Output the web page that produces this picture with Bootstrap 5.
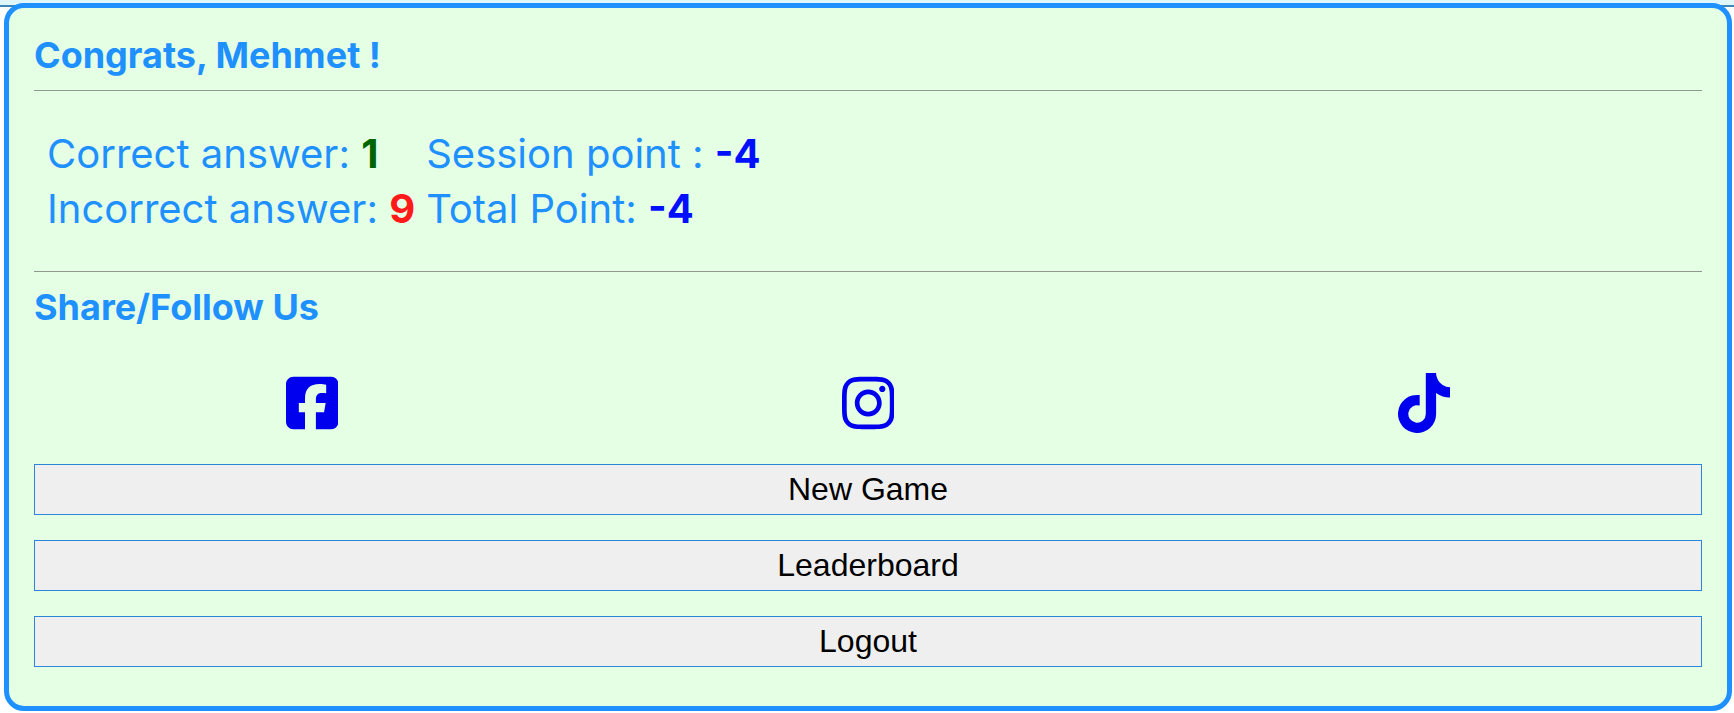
<!DOCTYPE html>
<html lang="en">
<head>
<meta charset="utf-8">
<meta name="viewport" content="width=device-width, initial-scale=1">
<title>Game result</title>
<link href="https://cdn.jsdelivr.net/npm/bootstrap@5.3.0/dist/css/bootstrap.min.css" rel="stylesheet">
<style>
body { font-family: Inter, sans-serif; background: #fff; }
.top-strip { height: 7px; background: #e0f7fa; border-bottom: 2px solid #3a87b8; }
.result-card { margin: -4px 2px 0 4px; padding: 25px; border: 5px solid #1e90ff; border-radius: 20px; background: #e4ffe4; color: #1e90ff; }
.result-title { font-size: 36px; line-height: 44px; font-weight: 700; }
.rule { height: 1px; border: 0; opacity: 1; background: #8f998f; margin: 0; }
.title-rule { margin-top: 13px; }
.share-title { margin-top: 13px; }
.stats { margin: 35px 12px; font-size: 40px; line-height: 55px; font-weight: 400; }
.stats td { padding: 0 10px 0 1px; }
.stats strong { font-weight: 700; }
.good { color: #006400; }
.bad { color: #ff1a1a; }
.points { color: #0010ff; }
.social { margin: 44px 0 31px; }
.social svg { height: 60px; display: block; fill: #0000ee; }
.game-btn { font-family: "Liberation Sans", Arial, sans-serif; font-size: 32px; line-height: 49px; padding: 0; color: #000; background: #efefef; border: 1px solid #2b86d9; border-radius: 0; }
.game-btn:hover { background: #e5e5e5; border-color: #1e90ff; color: #000; }
.actions { gap: 25px; padding-bottom: 14px; }
</style>
</head>
<body>
<div class="top-strip"></div>
<main class="result-card">
  <h1 class="result-title mb-0">Congrats, Mehmet !</h1>
  <hr class="rule title-rule">
  <table class="stats">
    <tbody>
      <tr><td>Correct answer: <strong class="good">1</strong></td><td>Session point : <strong class="points">-4</strong></td></tr>
      <tr><td>Incorrect answer: <strong class="bad">9</strong></td><td>Total Point: <strong class="points">-4</strong></td></tr>
    </tbody>
  </table>
  <hr class="rule">
  <h2 class="result-title share-title mb-0">Share/Follow Us</h2>
  <nav class="social row g-0" aria-label="Social links">
    <div class="col-4 d-flex justify-content-center"><a href="#" aria-label="Facebook"><svg viewBox="0 0 448 512"><path d="M64 32C28.700 32 0 60.700 0 96V416c0 35.300 28.700 64 64 64h98.200V334.200H109.400V256h52.800V222.300c0-87.100 39.400-127.500 125-127.500c16.200 0 44.200 3.200 55.700 6.400V172c-6-.6-16.500-1-29.600-1c-42 0-58.200 15.900-58.200 57.200V256h83.600l-14.400 78.200H255V480H384c35.300 0 64-28.700 64-64V96c0-35.300-28.700-64-64-64H64z"/></svg></a></div>
    <div class="col-4 d-flex justify-content-center"><a href="#" aria-label="Instagram"><svg viewBox="0 0 448 512"><path d="M224.100 141c-63.600 0-114.900 51.300-114.900 114.900s51.300 114.900 114.900 114.900S339 319.500 339 255.900 287.700 141 224.100 141zm0 189.600c-41.100 0-74.700-33.500-74.700-74.700s33.500-74.700 74.700-74.700 74.700 33.500 74.700 74.700-33.600 74.700-74.700 74.700zm146.400-194.300c0 14.900-12 26.800-26.800 26.800-14.900 0-26.800-12-26.800-26.800s12-26.800 26.800-26.800 26.800 12 26.800 26.800zm76.100 27.200c-1.700-35.900-9.900-67.700-36.200-93.900-26.200-26.200-58-34.400-93.900-36.200-37-2.100-147.900-2.100-184.900 0-35.800 1.700-67.600 9.900-93.900 36.100s-34.400 58-36.200 93.900c-2.100 37-2.100 147.900 0 184.900 1.700 35.900 9.900 67.700 36.200 93.900s58 34.400 93.900 36.200c37 2.100 147.900 2.100 184.900 0 35.900-1.700 67.700-9.900 93.900-36.200 26.200-26.200 34.400-58 36.200-93.900 2.100-37 2.100-147.800 0-184.800zM398.800 388c-7.800 19.600-22.900 34.700-42.600 42.600-29.500 11.700-99.500 9-132.100 9s-102.700 2.600-132.100-9c-19.600-7.800-34.700-22.900-42.600-42.600-11.700-29.500-9-99.500-9-132.100s-2.600-102.700 9-132.100c7.800-19.600 22.900-34.700 42.600-42.600 29.500-11.700 99.500-9 132.100-9s102.700-2.600 132.100 9c19.600 7.800 34.700 22.900 42.600 42.600 11.700 29.500 9 99.500 9 132.100s2.700 102.700-9 132.100z"/></svg></a></div>
    <div class="col-4 d-flex justify-content-center"><a href="#" aria-label="TikTok"><svg viewBox="0 0 448 512"><path d="M448 209.900a210.100 210.100 0 0 1-122.800-39.300V349.400A162.600 162.600 0 1 1 185 188.300V278.200a74.600 74.600 0 1 0 52.200 71.200V0l88 0a121.200 121.200 0 0 0 1.900 22.200h0A122.200 122.200 0 0 0 381 102.400a121.400 121.400 0 0 0 67 20.100z"/></svg></a></div>
  </nav>
  <div class="actions d-grid">
    <button type="button" class="btn game-btn">New Game</button>
    <button type="button" class="btn game-btn">Leaderboard</button>
    <button type="button" class="btn game-btn">Logout</button>
  </div>
</main>
<script src="https://cdn.jsdelivr.net/npm/bootstrap@5.3.0/dist/js/bootstrap.bundle.min.js"></script>
</body>
</html>
